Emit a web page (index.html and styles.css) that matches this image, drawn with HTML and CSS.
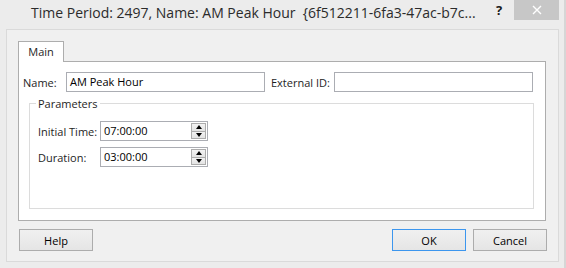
FILE: index.html
```html
<!DOCTYPE html>
<html lang="en">
<head>
  <meta charset="UTF-8" />
  <title>Time Period</title>
  <link rel="stylesheet" href="styles.css">
</head>
<body>
  <div class="window">
    <div class="titlebar">
      <div class="title">Time Period: 2497, Name: AM Peak Hour&nbsp;&nbsp;{6f512211-6fa3-47ac-b7c...</div>
      <div class="help-glyph">?</div>
      <div class="close-btn">
        <svg width="10" height="10" viewBox="0 0 10 10">
          <path d="M1 1 L9 9 M9 1 L1 9" stroke="#fff" stroke-width="1.4" />
        </svg>
      </div>
    </div>

    <div class="frame">
      <div class="tabs">
        <div class="tab active">Main</div>
      </div>
      <div class="panel">
        <div class="row">
          <label class="lbl lbl-name">Name:</label>
          <div class="field field-name">AM Peak Hour</div>
          <label class="lbl lbl-ext">External ID:</label>
          <div class="field field-ext"></div>
        </div>

        <fieldset class="group">
          <legend>Parameters</legend>
          <div class="param-row">
            <label class="lbl lbl-param">Initial Time:</label>
            <div class="field spin">
              <span class="spin-value">07:00:00</span>
              <div class="spin-buttons">
                <div class="spin-btn"><span class="arrow-up"></span></div>
                <div class="spin-btn"><span class="arrow-down"></span></div>
              </div>
            </div>
          </div>
          <div class="param-row">
            <label class="lbl lbl-param">Duration:</label>
            <div class="field spin">
              <span class="spin-value">03:00:00</span>
              <div class="spin-buttons">
                <div class="spin-btn"><span class="arrow-up"></span></div>
                <div class="spin-btn"><span class="arrow-down"></span></div>
              </div>
            </div>
          </div>
        </fieldset>
      </div>

      <div class="actions">
        <button class="btn">Help</button>
        <div class="spacer"></div>
        <button class="btn btn-default">OK</button>
        <button class="btn">Cancel</button>
      </div>
    </div>
  </div>
</body>
</html>
```

FILE: styles.css
```css
* {
  box-sizing: border-box;
}

html, body {
  margin: 0;
  padding: 0;
  width: 566px;
  height: 268px;
  overflow: hidden;
  background: #ececec;
  font-family: 'Open Sans', 'Noto Sans', sans-serif;
  font-size: 11px;
  color: #000;
}

.window {
  width: 566px;
  height: 268px;
  background: #ececec;
  border-right: 2px solid #d6d6d6;
}

/* title bar */

.titlebar {
  position: relative;
  height: 29px;
}

.title {
  position: absolute;
  left: 31px;
  top: 3px;
  font-size: 14px;
  color: #2b2b2b;
  white-space: nowrap;
}

.help-glyph {
  position: absolute;
  left: 496px;
  top: 1px;
  font-size: 13px;
  font-weight: 700;
  color: #1a1a1a;
}

.close-btn {
  position: absolute;
  left: 514px;
  top: 0;
  width: 45px;
  height: 20px;
  background: #c7c7c7;
  display: flex;
  justify-content: center;
  align-items: center;
}

/* inner frame */

.frame {
  margin-left: 6px;
  width: 553px;
  height: 233px;
  background: #f0f0f0;
  border: 1px solid #dadada;
  padding: 11px 0 0 11px;
}

.tabs {
  display: flex;
  height: 20px;
}

.tab {
  width: 46px;
  height: 21px;
  background: #fff;
  border: 1px solid #adadad;
  border-bottom: none;
  text-align: center;
  line-height: 19px;
  position: relative;
  z-index: 1;
  color: #1e1e1e;
}

.panel {
  width: 528px;
  height: 160px;
  background: #fff;
  border: 1px solid #adadad;
  padding: 10px 0 0 4px;
}

.row {
  display: flex;
  align-items: center;
  height: 20px;
}

.lbl {
  color: #1e1e1e;
  white-space: nowrap;
}

.lbl-name {
  width: 43px;
}

.lbl-ext {
  margin-left: 6px;
  width: 63px;
}

.field {
  height: 20px;
  border: 1px solid #abadb3;
  background: #fff;
  padding: 0 3px;
  line-height: 18px;
  color: #000;
}

.field-name {
  width: 199px;
}

.field-ext {
  width: 199px;
}

.group {
  margin: 4px 0 0 6px;
  width: 505px;
  height: 113px;
  border: 1px solid #dcdcdc;
  padding: 7px 0 0 8px;
}

.group legend {
  padding: 0 2px;
  margin-left: -2px;
  color: #1e1e1e;
}

.param-row {
  display: flex;
  align-items: center;
  height: 20px;
  margin-top: 3px;
  margin-bottom: 6px;
}

.lbl-param {
  width: 62px;
}

.spin {
  width: 108px;
  display: flex;
  align-items: center;
  justify-content: space-between;
  padding: 0 1px 0 3px;
}

.spin-buttons {
  width: 15px;
  height: 16px;
  display: flex;
  flex-direction: column;
  border: 1px solid #acacac;
}

.spin-btn {
  flex: 1;
  background: linear-gradient(#f2f2f2, #e3e3e3);
  display: flex;
  justify-content: center;
  align-items: center;
}

.spin-btn + .spin-btn {
  border-top: 1px solid #acacac;
}

.arrow-up {
  width: 0;
  height: 0;
  border-left: 3px solid transparent;
  border-right: 3px solid transparent;
  border-bottom: 4px solid #000;
}

.arrow-down {
  width: 0;
  height: 0;
  border-left: 3px solid transparent;
  border-right: 3px solid transparent;
  border-top: 4px solid #000;
}

/* buttons */

.actions {
  display: flex;
  margin-top: 8px;
  padding-right: 11px;
  gap: 7px;
}

.spacer {
  flex: 1;
}

.btn {
  width: 74px;
  height: 22px;
  margin: 0;
  padding: 0;
  font-family: inherit;
  font-size: 11px;
  color: #000;
  background: linear-gradient(#f0f0f0, #e5e5e5);
  border: 1px solid #acacac;
}

.btn:first-child {
  margin-left: 1px;
}

.btn-default {
  border-color: #3c96ee;
}
```
